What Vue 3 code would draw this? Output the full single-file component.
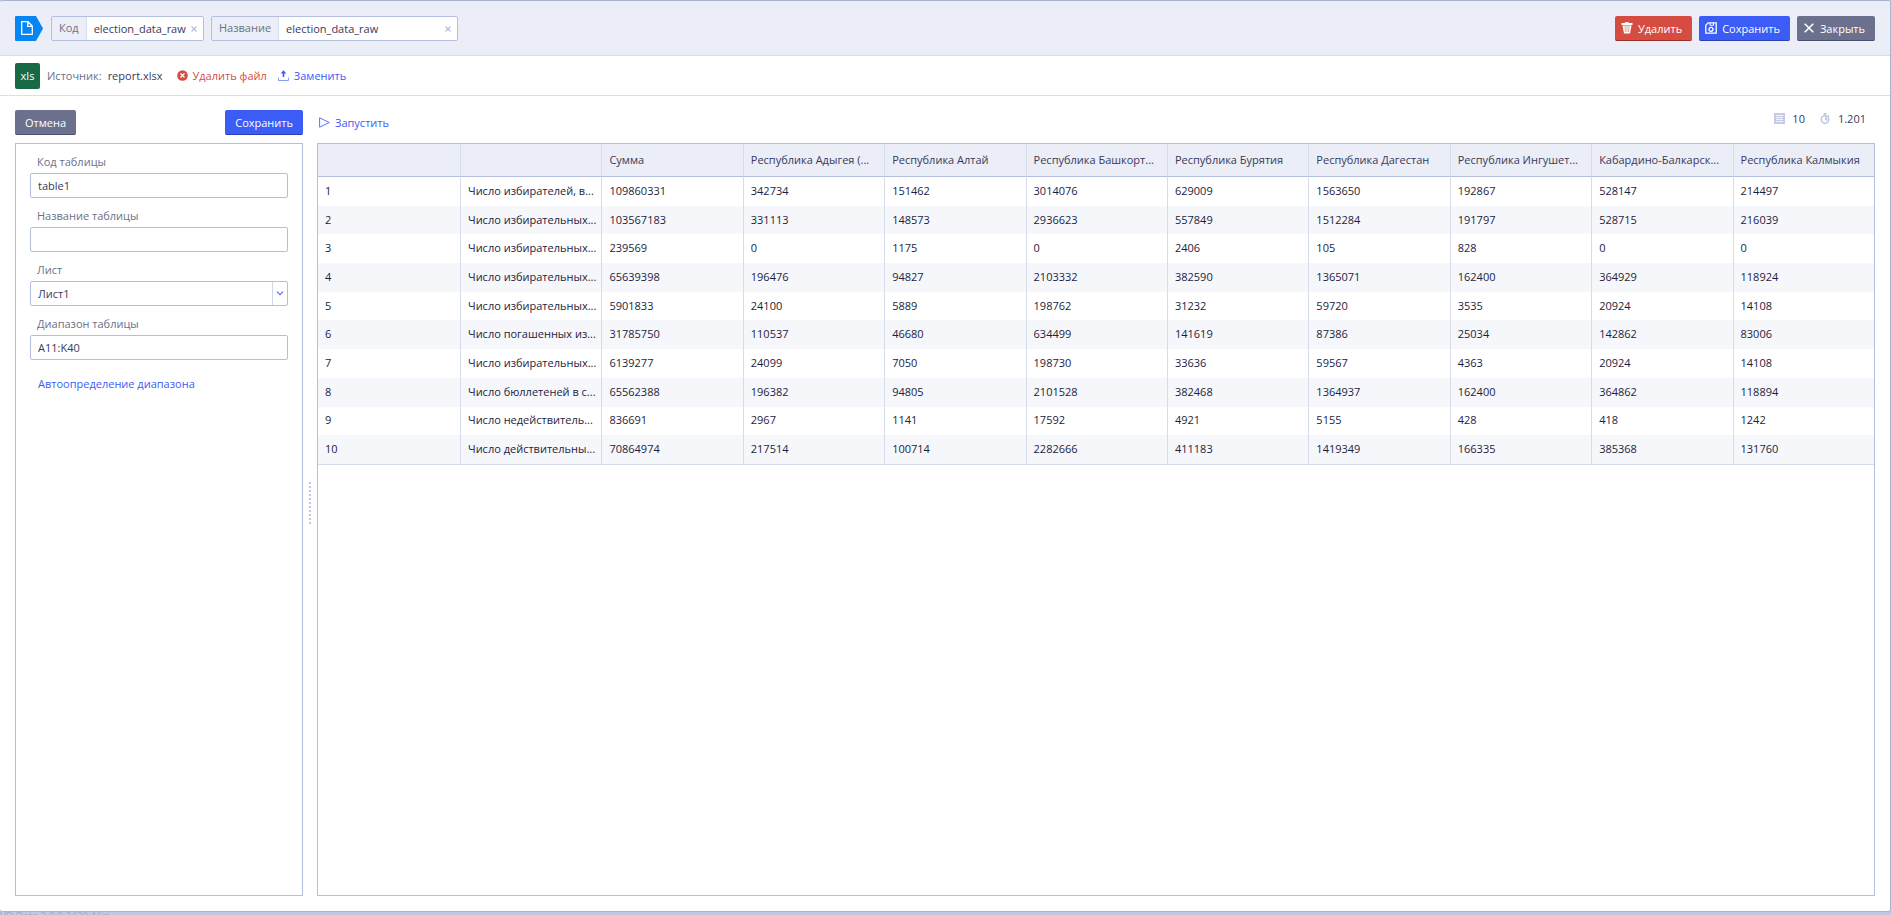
<script setup>
import { ref } from 'vue'

const code = ref('election_data_raw')
const title = ref('election_data_raw')
const tableCode = ref('table1')
const tableName = ref('')
const sheet = ref('Лист1')
const range = ref('A11:K40')

const columns = ['', '', 'Сумма', 'Республика Адыгея (...', 'Республика Алтай', 'Республика Башкорт...', 'Республика Бурятия', 'Республика Дагестан', 'Республика Ингушет...', 'Кабардино-Балкарск...', 'Республика Калмыкия']
const rows = [
  ['1', 'Число избирателей, в...', '109860331', '342734', '151462', '3014076', '629009', '1563650', '192867', '528147', '214497'],
  ['2', 'Число избирательных...', '103567183', '331113', '148573', '2936623', '557849', '1512284', '191797', '528715', '216039'],
  ['3', 'Число избирательных...', '239569', '0', '1175', '0', '2406', '105', '828', '0', '0'],
  ['4', 'Число избирательных...', '65639398', '196476', '94827', '2103332', '382590', '1365071', '162400', '364929', '118924'],
  ['5', 'Число избирательных...', '5901833', '24100', '5889', '198762', '31232', '59720', '3535', '20924', '14108'],
  ['6', 'Число погашенных из...', '31785750', '110537', '46680', '634499', '141619', '87386', '25034', '142862', '83006'],
  ['7', 'Число избирательных...', '6139277', '24099', '7050', '198730', '33636', '59567', '4363', '20924', '14108'],
  ['8', 'Число бюллетеней в с...', '65562388', '196382', '94805', '2101528', '382468', '1364937', '162400', '364862', '118894'],
  ['9', 'Число недействитель...', '836691', '2967', '1141', '17592', '4921', '5155', '428', '418', '1242'],
  ['10', 'Число действительны...', '70864974', '217514', '100714', '2282666', '411183', '1419349', '166335', '385368', '131760'],
]
</script>

<template>
  <div class="screen">
    <div class="window">
      <header class="top">
        <svg class="tag" width="28" height="25" viewBox="0 0 28 25" aria-hidden="true">
          <path d="M1 0H21L28 12.5L21 25H1Q0 25 0 24V1Q0 0 1 0Z" fill="#0486f4" />
          <path d="M6.7 5.7H13L17.3 10V18.3H6.7ZM12.7 6V10.3H17" fill="none" stroke="#fff" stroke-width="1.3" />
        </svg>
        <div class="field code">
          <label for="code">Код</label>
          <input id="code" v-model="code" type="text" />
          <button type="button" class="clear" aria-label="Очистить код" @click="code = ''">
            <svg width="6" height="6" viewBox="0 0 6 6"><path d="M.5 .5L5.5 5.5M5.5 .5L.5 5.5" /></svg>
          </button>
        </div>
        <div class="field title">
          <label for="title">Название</label>
          <input id="title" v-model="title" type="text" />
          <button type="button" class="clear" aria-label="Очистить название" @click="title = ''">
            <svg width="6" height="6" viewBox="0 0 6 6"><path d="M.5 .5L5.5 5.5M5.5 .5L.5 5.5" /></svg>
          </button>
        </div>
        <div class="actions">
          <button type="button" class="btn red">
            <svg width="12" height="12" viewBox="0 0 12 12"><path d="M.5 1H4V.3H8V1H11.5V3H.5ZM1.5 3.5H10.5L9 11.5H3Z" fill="#fff" /><path d="M4 4L4.5 10M6 4V10M8 4L7.5 10" stroke="#e9a59d" stroke-width="1" /></svg>
            Удалить
          </button>
          <button type="button" class="btn blue">
            <svg width="12" height="12" viewBox="0 0 12 12" fill="none" stroke="#fff"><path d="M3.2 .8H11.2V11.2H.8V3.2Z" stroke-width="1.3" /><circle cx="6" cy="7.3" r="2" stroke-width="1.3" /><path d="M5 1V3.3H8.5V1" /></svg>
            Сохранить
          </button>
          <button type="button" class="btn gray">
            <svg width="12" height="12" viewBox="0 0 12 12"><path d="M1.7 1.7L10.3 10.3M10.3 1.7L1.7 10.3" stroke="#fff" stroke-width="1.6" /></svg>
            Закрыть
          </button>
        </div>
      </header>

      <section class="source">
        <span class="xls">xls</span>
        <span class="muted">Источник:</span>
        <span class="file">report.xlsx</span>
        <button type="button" class="link danger">
          <svg width="11" height="11" viewBox="0 0 11 11"><circle cx="5.5" cy="5.5" r="5.3" fill="#d54d40" /><path d="M3.5 3.5L7.5 7.5M7.5 3.5L3.5 7.5" stroke="#fff" stroke-width="1.4" /></svg>
          Удалить файл
        </button>
        <button type="button" class="link">
          <svg width="11" height="11" viewBox="0 0 11 11"><path d="M5.5 .3L8.3 3.5H6.3V7H4.7V3.5H2.7Z" fill="#3b5cf5" /><path d="M.5 7.5V10.5H10.5V7.5" fill="none" stroke="#8b9df8" /></svg>
          Заменить
        </button>
      </section>

      <main class="work">
        <aside class="side">
          <div class="sidebar-actions">
            <button type="button" class="btn gray plain">Отмена</button>
            <button type="button" class="btn blue plain">Сохранить</button>
          </div>
          <form class="panel form" @submit.prevent>
            <label for="t-code">Код таблицы</label>
            <input id="t-code" v-model="tableCode" type="text" />
            <label for="t-name">Название таблицы</label>
            <input id="t-name" v-model="tableName" type="text" />
            <label for="t-sheet">Лист</label>
            <div class="select">
              <select id="t-sheet" v-model="sheet"><option>Лист1</option></select>
              <span class="arrow" aria-hidden="true">
                <svg width="8" height="5" viewBox="0 0 8 5"><path d="M1 .7L4 3.7L7 .7" fill="none" stroke="#4f6df6" stroke-width="1.1" /></svg>
              </span>
            </div>
            <label for="t-range">Диапазон таблицы</label>
            <input id="t-range" v-model="range" type="text" />
            <button type="button" class="link auto">Автоопределение диапазона</button>
          </form>
        </aside>

        <div class="splitter" aria-hidden="true"><i v-for="n in 11" :key="n"></i></div>

        <section class="result">
          <div class="toolbar">
            <button type="button" class="link run">
              <svg width="11" height="11" viewBox="0 0 11 11"><path d="M.6 .8L10.3 5.5L.6 10.2Z" fill="none" stroke="#5873f7" stroke-linejoin="round" /></svg>
              Запустить
            </button>
            <div class="stats">
              <svg width="11" height="11" viewBox="0 0 11 11"><rect width="11" height="11" fill="#c5cce4" /><path d="M2 2.5H9M2 4.5H9M2 6.5H9M2 8.5H9" stroke="#f3f5fa" /></svg>
              <span>10</span>
              <svg class="clock" width="11" height="11" viewBox="0 0 11 11"><circle cx="5" cy="6.5" r="3.8" fill="none" stroke="#bcc5e0" stroke-width="1.4" /><path d="M3.5 .6H6.5M5 1V3M8 2.5L9 3.5" stroke="#bcc5e0" stroke-width="1.4" /><path d="M5 6.5V4A2.6 2.6 0 0 1 6.8 8.3Z" fill="#bcc5e0" /></svg>
              <span>1.201</span>
            </div>
          </div>
          <div class="panel grid">
            <table>
              <thead>
                <tr><th v-for="(c, i) in columns" :key="i" scope="col">{{ c }}</th></tr>
              </thead>
              <tbody>
                <tr v-for="r in rows" :key="r[0]"><td v-for="(c, i) in r" :key="i">{{ c }}</td></tr>
              </tbody>
            </table>
          </div>
        </section>
      </main>
    </div>
    <footer class="under">VD Data 2.0.0.2430 Alisi</footer>
  </div>
</template>

<style>
body { background: #c1c9e0; }
</style>

<style scoped>
* { box-sizing: border-box; }
.screen {
  display: flex;
  flex-direction: column;
  height: 100vh;
  overflow: hidden;
  background: #c1c9e0;
  color: #39395c;
  font: 11px/15px "Open Sans", "Noto Sans", sans-serif;
}
button, input, select { font: inherit; color: inherit; margin: 0; padding: 0; }
button { cursor: pointer; border: 0; background: none; }
svg { flex: none; }
.window {
  flex: 1;
  display: flex;
  flex-direction: column;
  min-height: 0;
  background: #fff;
  border: 1px solid #a9b1d0;
  border-left: 0;
  border-radius: 3px;
}
.top {
  display: flex;
  align-items: flex-start;
  height: 55px;
  padding: 15px 15px 0;
  background: #ebeef6;
  border-bottom: 1px solid #d8deec;
  border-radius: 3px 3px 0 0;
}
.tag { margin-right: 8px; }
.field {
  display: flex;
  align-items: center;
  height: 25px;
  margin-right: 7px;
  background: #fff;
  border: 1px solid #b3bfdc;
  border-radius: 2px;
}
.code { width: 153px; }
.title { width: 247px; }
.field label {
  height: 23px;
  padding: 3px 7px;
  color: #6b7088;
  background: #ebeef6;
  border-right: 1px solid #d5dcec;
}
.field input {
  flex: 1;
  min-width: 0;
  height: 23px;
  padding-left: 7px;
  border: 0;
  background: none;
  outline: 0;
}
.clear { display: flex; padding-right: 6px; }
.clear path { stroke: #b3bfdc; stroke-width: 1.2; fill: none; }
.actions { display: flex; gap: 7px; margin-left: auto; }
.btn {
  display: flex;
  align-items: center;
  gap: 5px;
  height: 25px;
  padding: 0 10px 0 6px;
  color: #fff;
  font-weight: 500;
  border-bottom: 1px solid;
  border-radius: 2px;
}
.plain { padding: 0 10px; }
.red { background: #d54d40; border-color: #9c2f28; }
.blue { background: #3b5cf5; border-color: #2a3fb5; }
.gray { background: #6b718c; border-color: #4a4f70; }
.source {
  display: flex;
  align-items: center;
  height: 40px;
  padding: 0 15px;
  border-bottom: 1px solid #d8deec;
}
.xls {
  display: flex;
  align-items: center;
  justify-content: center;
  width: 25px;
  height: 26px;
  margin-right: 7px;
  color: #fff;
  font-weight: 500;
  background: #176a45;
  border-radius: 2px;
}
.muted { color: #6b7088; margin-right: 6px; }
.link { display: flex; align-items: center; gap: 5px; color: #3b5cf5; }
.source .link { margin-right: 11px; }
.file { margin-right: 14px; }
.source .danger { color: #d54d40; }
.work { flex: 1; display: flex; min-height: 0; padding: 14px 15px 15px; }
.side { display: flex; flex-direction: column; width: 288px; }
.sidebar-actions { display: flex; justify-content: space-between; margin-bottom: 8px; }
.panel { flex: 1; border: 1px solid #b3bfdc; min-height: 0; }
.form { display: flex; flex-direction: column; padding: 10px 14px; }
.form label { height: 19px; margin-left: 7px; color: #6b7088; }
.form input, .select {
  height: 25px;
  margin-bottom: 10px;
  border: 1px solid #b3bfdc;
  border-radius: 2px;
  background: #fff;
}
.form input { padding: 0 7px; }
.select { display: flex; }
.select select {
  flex: 1;
  padding: 0 7px;
  appearance: none;
  border: 0;
  background: none;
}
.arrow {
  display: flex;
  align-items: center;
  justify-content: center;
  width: 15px;
  border-left: 1px solid #cfd7ea;
}
.auto { align-self: flex-start; margin: 6px 0 0 8px; }
.splitter {
  display: flex;
  flex-direction: column;
  align-items: center;
  justify-content: center;
  gap: 2px;
  width: 14px;
}
.splitter i { width: 2px; height: 2px; background: #c1c9e0; }
.result { flex: 1; display: flex; flex-direction: column; min-width: 0; }
.toolbar { display: flex; justify-content: space-between; height: 33px; }
.run { height: 25px; margin-left: 2px; font-weight: 500; }
.stats { display: flex; align-items: center; height: 17px; padding-right: 9px; gap: 7px; }
.clock { margin-left: 8px; }
.grid { overflow: hidden; background: #fff; }
table {
  width: 100%;
  height: 321px;
  table-layout: fixed;
  border-collapse: separate;
  border-spacing: 0;
  border-bottom: 1px solid #d5dcec;
}
thead tr { height: 33px; }
th, td {
  padding: 0 1px 2px 7px;
  text-align: left;
  white-space: nowrap;
  overflow: hidden;
  text-overflow: ellipsis;
  border-left: 1px solid #d5dcec;
}
th:first-child, td:first-child { border-left: 0; }
th:first-child { width: 142px; }
th {
  height: 33px;
  font-weight: 500;
  background: #ebeef6;
  border-bottom: 1px solid #b3bfdc;
}
td { color: #1d1d3d; }
tbody tr:nth-child(even) { background: #f5f7fb; }
.under {
  height: 3px;
  overflow: hidden;
  color: #a3accf;
  line-height: 9px;
  font-size: 10px;
}
</style>
